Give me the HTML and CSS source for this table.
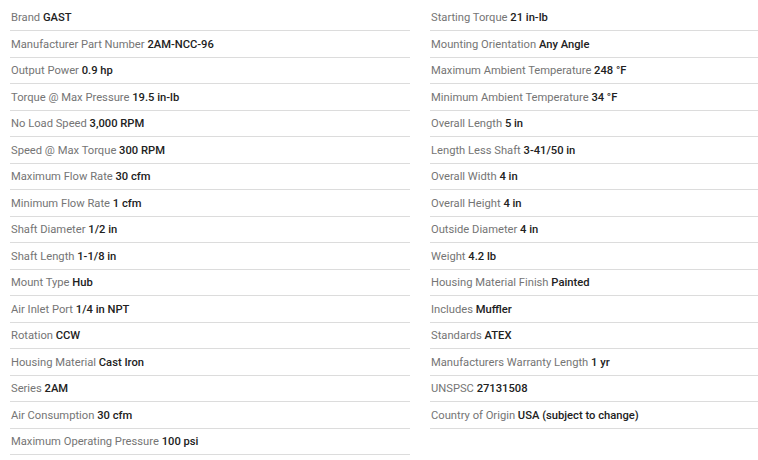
FILE: index.html
```html
<!DOCTYPE html>
<html>
<head>
<meta charset="utf-8">
<link rel="stylesheet" href="styles.css">
</head>
<body>
<div class="specs">
  <ul class="col">
    <li class="row"><span class="label">Brand</span> <span class="val">GAST</span></li>
    <li class="row"><span class="label">Manufacturer Part Number</span> <span class="val">2AM-NCC-96</span></li>
    <li class="row"><span class="label">Output Power</span> <span class="val">0.9 hp</span></li>
    <li class="row"><span class="label">Torque @ Max Pressure</span> <span class="val">19.5 in-lb</span></li>
    <li class="row"><span class="label">No Load Speed</span> <span class="val">3,000 RPM</span></li>
    <li class="row"><span class="label">Speed @ Max Torque</span> <span class="val">300 RPM</span></li>
    <li class="row"><span class="label">Maximum Flow Rate</span> <span class="val">30 cfm</span></li>
    <li class="row"><span class="label">Minimum Flow Rate</span> <span class="val">1 cfm</span></li>
    <li class="row"><span class="label">Shaft Diameter</span> <span class="val">1/2 in</span></li>
    <li class="row"><span class="label">Shaft Length</span> <span class="val">1-1/8 in</span></li>
    <li class="row"><span class="label">Mount Type</span> <span class="val">Hub</span></li>
    <li class="row"><span class="label">Air Inlet Port</span> <span class="val">1/4 in NPT</span></li>
    <li class="row"><span class="label">Rotation</span> <span class="val">CCW</span></li>
    <li class="row"><span class="label">Housing Material</span> <span class="val">Cast Iron</span></li>
    <li class="row"><span class="label">Series</span> <span class="val">2AM</span></li>
    <li class="row"><span class="label">Air Consumption</span> <span class="val">30 cfm</span></li>
    <li class="row"><span class="label">Maximum Operating Pressure</span> <span class="val">100 psi</span></li>
  </ul>
  <ul class="col col-right">
    <li class="row"><span class="label">Starting Torque</span> <span class="val">21 in-lb</span></li>
    <li class="row"><span class="label">Mounting Orientation</span> <span class="val">Any Angle</span></li>
    <li class="row"><span class="label">Maximum Ambient Temperature</span> <span class="val">248 °F</span></li>
    <li class="row"><span class="label">Minimum Ambient Temperature</span> <span class="val">34 °F</span></li>
    <li class="row"><span class="label">Overall Length</span> <span class="val">5 in</span></li>
    <li class="row"><span class="label">Length Less Shaft</span> <span class="val">3-41/50 in</span></li>
    <li class="row"><span class="label">Overall Width</span> <span class="val">4 in</span></li>
    <li class="row"><span class="label">Overall Height</span> <span class="val">4 in</span></li>
    <li class="row"><span class="label">Outside Diameter</span> <span class="val">4 in</span></li>
    <li class="row"><span class="label">Weight</span> <span class="val">4.2 lb</span></li>
    <li class="row"><span class="label">Housing Material Finish</span> <span class="val">Painted</span></li>
    <li class="row"><span class="label">Includes</span> <span class="val">Muffler</span></li>
    <li class="row"><span class="label">Standards</span> <span class="val">ATEX</span></li>
    <li class="row"><span class="label">Manufacturers Warranty Length</span> <span class="val">1 yr</span></li>
    <li class="row"><span class="label">UNSPSC</span> <span class="val">27131508</span></li>
    <li class="row"><span class="label">Country of Origin</span> <span class="val">USA (subject to change)</span></li>
  </ul>
</div>
</body>
</html>
```
FILE: styles.css
```css
html, body {
  margin: 0;
  padding: 0;
  background: #fff;
  overflow: hidden;
}
body {
  font-family: Roboto, "Liberation Sans", sans-serif;
  font-size: 11.2px;
  color: #757575;
}
.specs {
  display: flex;
  gap: 20px;
  padding: 4.5px 0 0 10px;
}
.col {
  list-style: none;
  margin: 0;
  padding: 0;
  width: 400px;
  flex: none;
}
.col-right {
  width: 328px;
}
.row {
  line-height: 16.5px;
  padding: 5.5px 0 3.5px 1px;
  border-bottom: 1px solid #dcdcdc;
  white-space: nowrap;
}
.label {
  color: #757575;
}
.val {
  color: #212121;
  font-weight: 500;
}
```
